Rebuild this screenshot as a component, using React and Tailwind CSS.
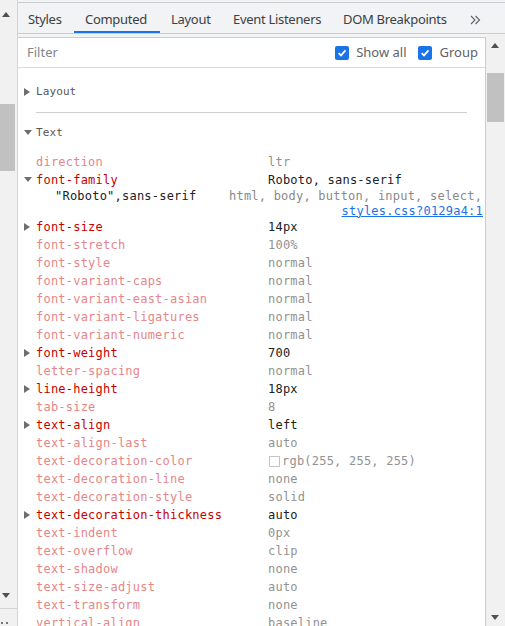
import React from "react";

const mono = { fontFamily: '"DejaVu Sans Mono", monospace' };

const rowsA = [
  { n: "font-size", v: "14px", a: true },
  { n: "font-stretch", v: "100%" },
  { n: "font-style", v: "normal" },
  { n: "font-variant-caps", v: "normal" },
  { n: "font-variant-east-asian", v: "normal" },
  { n: "font-variant-ligatures", v: "normal" },
  { n: "font-variant-numeric", v: "normal" },
  { n: "font-weight", v: "700", a: true },
  { n: "letter-spacing", v: "normal" },
  { n: "line-height", v: "18px", a: true },
  { n: "tab-size", v: "8" },
  { n: "text-align", v: "left", a: true },
  { n: "text-align-last", v: "auto" },
  { n: "text-decoration-color", v: "rgb(255, 255, 255)", swatch: true },
  { n: "text-decoration-line", v: "none" },
  { n: "text-decoration-style", v: "solid" },
  { n: "text-decoration-thickness", v: "auto", a: true },
  { n: "text-indent", v: "0px" },
  { n: "text-overflow", v: "clip" },
  { n: "text-shadow", v: "none" },
  { n: "text-size-adjust", v: "auto" },
  { n: "text-transform", v: "none" },
  { n: "vertical-align", v: "baseline" },
];

function TriRight() {
  return (
    <svg width="6" height="8" viewBox="0 0 6 8" className="block">
      <path d="M0 0 L6 4 L0 8 Z" fill="#6e6e6e" />
    </svg>
  );
}
function TriDown() {
  return (
    <svg width="8" height="6" viewBox="0 0 8 6" className="block">
      <path d="M0 0 L8 0 L4 5 Z" fill="#6e6e6e" />
    </svg>
  );
}
function ArrowUp() {
  return (
    <svg width="8" height="5" viewBox="0 0 8 5" className="block">
      <path d="M0 5 L4 0 L8 5 Z" fill="#505050" />
    </svg>
  );
}
function ArrowDown() {
  return (
    <svg width="8" height="5" viewBox="0 0 8 5" className="block">
      <path d="M0 0 L8 0 L4 5 Z" fill="#505050" />
    </svg>
  );
}
function Chevrons() {
  return (
    <svg width="11" height="10" viewBox="0 0 11 10" className="block">
      <path d="M1 1 L5 5 L1 9 M5.5 1 L9.5 5 L5.5 9" fill="none" stroke="#5f6368" strokeWidth="1.1" />
    </svg>
  );
}

function Check() {
  return (
    <span className="w-[14px] h-[14px] rounded-[2px] bg-[#1a73e8] flex items-center justify-center">
      <svg width="10" height="10" viewBox="0 0 10 10">
        <path d="M1.6 5.2 L4 7.4 L8.5 2.4" fill="none" stroke="#fff" strokeWidth="1.8" />
      </svg>
    </span>
  );
}

function Row({ n, v, a, swatch, tri }) {
  return (
    <div className="flex items-center h-[18px] text-[12px] tracking-[0.22px] whitespace-nowrap" style={mono}>
      <div className="w-[18px] pl-[6px] flex items-center">{a ? (tri === "down" ? <TriDown /> : <TriRight />) : null}</div>
      <div className={`w-[232px] ${a ? "text-[#c80000]" : "text-[#e68688]"}`}>{n}</div>
      <div className={`flex items-center ${a ? "text-[#202124]" : "text-[#929292]"}`}>
        {swatch && <span className="w-[11px] h-[11px] border border-[#c4c4c4] bg-white mr-[2px] ml-[1px]" />}
        {v}
      </div>
    </div>
  );
}

export default function App() {
  const tabs = [
    { t: "Styles", w: "w-[56px]", pl: "pl-[10px]" },
    { t: "Computed", w: "w-[86px]", pl: "pl-[11px]", active: true },
    { t: "Layout", w: "w-[62px]", pl: "pl-[11px]" },
    { t: "Event Listeners", w: "w-[110px]", pl: "pl-[11px]" },
    { t: "DOM Breakpoints", w: "w-[128px]", pl: "pl-[11px]" },
  ];
  return (
    <div className="w-[505px] h-[626px] flex overflow-hidden bg-white" style={{ fontFamily: '"Noto Sans", sans-serif' }}>
      {/* left scrollbar */}
      <div className="w-[18px] shrink-0 bg-[#f1f1f1] border-r border-[#d4d4d4] flex flex-col">
        <div className="h-[12px]" />
        <div className="pl-[2px]"><ArrowUp /></div>
        <div className="h-[87px]" />
        <div className="w-[15px] h-[67px] bg-[#c1c1c1]" />
        <div className="flex-1" />
        <div className="pl-[2px]"><ArrowDown /></div>
        <div className="h-[10px]" />
        <div className="h-[1px] bg-[#d4d4d4]" />
        <div className="h-[17px] flex items-end gap-[3px] pl-[1px] pb-[2px]">
          <span className="w-[2px] h-[2px] bg-[#777]" />
          <span className="w-[2px] h-[2px] bg-[#777]" />
        </div>
      </div>

      {/* main */}
      <div className="flex-1 flex flex-col min-w-0">
        <div className="h-[2px] bg-[#f1f3f4]" />
        <div className="h-[32px] bg-[#f1f3f4] border-t border-b border-[#cbcdd1] flex items-stretch">
          {tabs.map((tb) => (
            <div key={tb.t} className={`${tb.w} ${tb.pl} pt-[3px] relative flex items-center text-[13px] tracking-[-0.3px] text-[#3c4043] whitespace-nowrap`}>
              {tb.t}
              {tb.active && <div className="absolute left-0 right-0 bottom-0 h-[2px] bg-[#1a73e8]" />}
            </div>
          ))}
          <div className="pl-[10px] pt-[3px] flex items-center"><Chevrons /></div>
        </div>
        <div className="flex-1 flex min-h-0 pt-[3px] bg-[#f1f3f4]">
          <div className="flex-1 flex flex-col min-w-0 bg-white border-t border-r border-[#cbcdd1]">
            {/* filter bar */}
            <div className="h-[30px] shrink-0 border-b border-[#dadce0] flex items-center text-[13px]">
              <div className="pl-[9px] pt-[1px] flex-1 text-[#80868b]">Filter</div>
              <label className="flex items-center gap-[7px] text-[#5f6368] mr-[11px]">
                <Check />
                <span className="pt-[1px]">Show all</span>
              </label>
              <label className="flex items-center gap-[8px] text-[#5f6368] mr-[7px]">
                <Check />
                <span className="pt-[1px]">Group</span>
              </label>
            </div>
            {/* content */}
            <div className="flex-1 overflow-hidden pt-[15px]">
              <div className="flex items-center h-[18px] text-[11px] text-[#555] tracking-[0.1px]" style={mono}>
                <div className="w-[18px] pl-[6px]"><TriRight /></div>
                <span>Layout</span>
              </div>
              <div className="mt-[11px] ml-[18px] w-[431px] h-[1px] bg-[#cfcfcf]" />
              <div className="mt-[11px] flex items-center h-[18px] text-[11px] text-[#555] tracking-[0.1px]" style={mono}>
                <div className="w-[18px] pl-[6px]"><TriDown /></div>
                <span>Text</span>
              </div>
              <div className="mt-[11px]">
                <Row n="direction" v="ltr" />
                <div className="flex items-center h-[17px] text-[12px] tracking-[0.22px] whitespace-nowrap" style={mono}>
                  <div className="w-[18px] pl-[6px]"><TriDown /></div>
                  <div className="w-[232px] text-[#c80000]">font-family</div>
                  <div className="text-[#202124]">Roboto, sans-serif</div>
                </div>
                <div className="flex items-center h-[15px] text-[12px] tracking-[0.22px] whitespace-nowrap" style={mono}>
                  <div className="pl-[37px] w-[211px] text-[#202124]">"Roboto",sans-serif</div>
                  <div className="text-[#8a8a8a]">html, body, button, input, select,</div>
                </div>
                <div className="flex items-center justify-end h-[15px] pr-[2px] text-[12px] tracking-[0.22px] whitespace-nowrap" style={mono}>
                  <span className="text-[#1a73e8] underline">styles.css?0129a4:1</span>
                </div>
                {rowsA.map((r) => (
                  <Row key={r.n} {...r} />
                ))}
              </div>
            </div>
          </div>
          {/* right scrollbar */}
          <div className="w-[19px] shrink-0 bg-[#f1f1f1] flex flex-col -mt-[3px]">
            <div className="h-[9px]" />
            <div className="pl-[5px]"><ArrowUp /></div>
            <div className="h-[25px]" />
            <div className="ml-[1px] w-[17px] h-[49px] bg-[#c1c1c1]" />
            <div className="flex-1" />
            <div className="pl-[5px]"><ArrowDown /></div>
            <div className="h-[6px]" />
          </div>
        </div>
      </div>
    </div>
  );
}
